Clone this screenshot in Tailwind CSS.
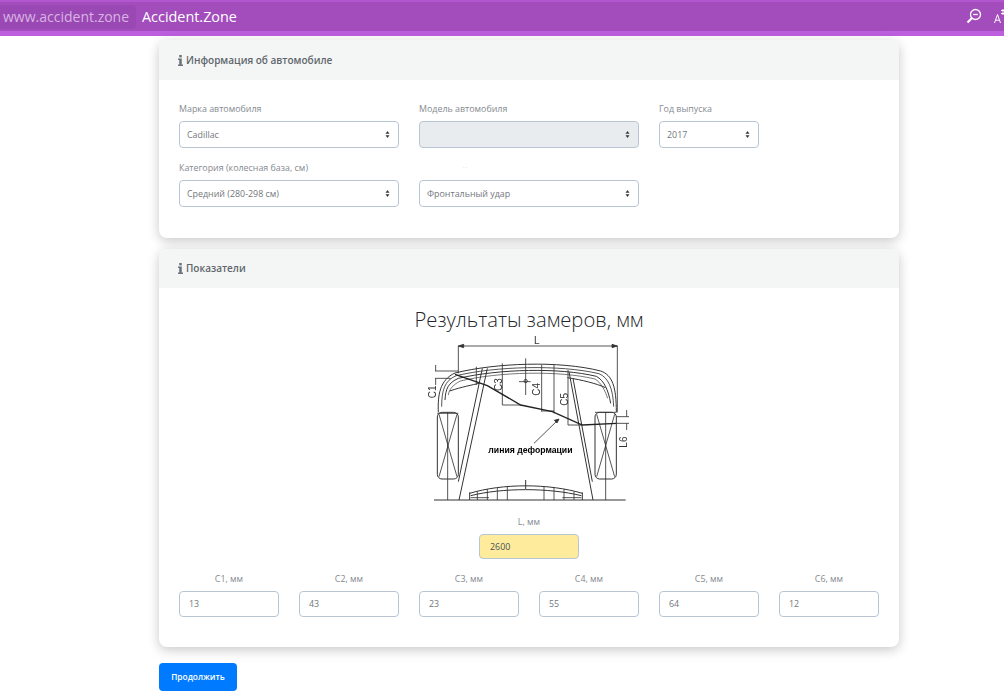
<!DOCTYPE html>
<html lang="ru">

<head>
    <meta charset="UTF-8">
    <meta name="viewport" content="width=device-width, initial-scale=1.0">
    <title>Accident.Zone</title>
    <script src="https://cdn.jsdelivr.net/npm/@tailwindcss/browser@4"></script>
</head>

<body class="bg-white font-['Open_Sans','Noto_Sans',sans-serif] h-[692px] w-[1004px] overflow-hidden">

    <!-- Navbar -->
    <header class="h-[36px] bg-[#a34dbd] border-t-2 border-b-[5px] border-t-[#b257cf] border-b-[#bc5edd] flex items-center justify-between overflow-hidden">
        <div class="flex items-center">
            <span class="h-[24px] w-[136px] pl-[3px] bg-[#9a48b3] rounded-r-sm text-[14px] leading-[23px] text-[#d8b4e4] whitespace-nowrap">www.accident.zone</span>
            <span class="ml-[6px] text-[14.4px] leading-[23px] text-white whitespace-nowrap">Accident.Zone</span>
        </div>
        <div class="flex items-center gap-[12px] -mr-[2px] -mt-[2px]">
            <svg class="w-[16px] h-[16px]" viewBox="0 0 16 16" fill="none" stroke="white">
                <circle cx="9.5" cy="6.5" r="5" stroke-width="1.3" />
                <path d="M7.2 6.5h4.6" stroke-width="1.3" />
                <path d="M6 10l-4.5 4.5" stroke-width="2.2" />
            </svg>
            <svg class="w-[12px] h-[16px]" viewBox="0 0 12 16" fill="none" stroke="white">
                <path d="M0.5 15L3.5 6.5L6.5 15M1.6 12.2h3.8" stroke-width="1" />
                <path d="M7 2.5h5M7 5.5h5M9 1v6" stroke-width="1" />
            </svg>
        </div>
    </header>

    <main class="w-[740px] ml-[159px] mt-[4px]">

        <!-- Car info -->
        <section class="h-[198px] rounded-lg bg-white shadow-[0_3px_12px_rgba(0,0,0,0.22)] overflow-hidden">
            <div class="h-[40px] bg-[#f4f6f6] px-[19px] flex items-center gap-[3px] text-[10px] font-semibold text-[#5f666c]">
                <svg class="w-[5px] h-[11px] fill-[#6c757d]" viewBox="0 0 5 11"><rect x="1.2" y="0" width="2.6" height="2.4" /><path d="M0 3.5h3.8v6h1.2V11H0V9.5h1.2v-4.5H0z" /></svg>
                Информация об автомобиле
            </div>
            <div class="px-[20px] pt-[21px] flex flex-wrap gap-x-[20px] gap-y-[12px] w-[740px]">
                <div class="w-[220px]">
                    <label class="block h-[20px] text-[8.9px] leading-[16px] text-[#858a8f]">Марка автомобиля</label>
                    <div class="relative h-[27px] border border-[#b8c6d4] rounded-[4px] pl-[7px] pt-[1px] flex items-center text-[8.9px] text-[#72777c]">Cadillac
                        <svg class="absolute right-[8px] top-[9px] w-[5px] h-[7px] fill-[#343a40]" viewBox="0 0 6 9"><path d="M3 0l2.6 3.5H.4zM3 9L.4 5.5h5.2z" /></svg>
                    </div>
                </div>
                <div class="w-[220px]">
                    <label class="block h-[20px] text-[8.9px] leading-[16px] text-[#858a8f]">Модель автомобиля</label>
                    <div class="relative h-[27px] border border-[#b8c6d4] rounded-[4px] bg-[#e9ecef]">
                        <svg class="absolute right-[8px] top-[9px] w-[5px] h-[7px] fill-[#343a40]" viewBox="0 0 6 9"><path d="M3 0l2.6 3.5H.4zM3 9L.4 5.5h5.2z" /></svg>
                    </div>
                </div>
                <div class="w-[100px]">
                    <label class="block h-[20px] text-[8.9px] leading-[16px] text-[#858a8f]">Год выпуска</label>
                    <div class="relative h-[27px] border border-[#b8c6d4] rounded-[4px] pl-[7px] pt-[1px] flex items-center text-[8.9px] text-[#72777c]">2017
                        <svg class="absolute right-[8px] top-[9px] w-[5px] h-[7px] fill-[#343a40]" viewBox="0 0 6 9"><path d="M3 0l2.6 3.5H.4zM3 9L.4 5.5h5.2z" /></svg>
                    </div>
                </div>
                <div class="w-[220px]">
                    <label class="block h-[20px] text-[8.9px] leading-[16px] text-[#858a8f]">Категория (колесная база, см)</label>
                    <div class="relative h-[27px] border border-[#b8c6d4] rounded-[4px] pl-[7px] pt-[1px] flex items-center text-[8.9px] text-[#72777c]">Средний (280-298 см)
                        <svg class="absolute right-[8px] top-[9px] w-[5px] h-[7px] fill-[#343a40]" viewBox="0 0 6 9"><path d="M3 0l2.6 3.5H.4zM3 9L.4 5.5h5.2z" /></svg>
                    </div>
                </div>
                <div class="w-[220px]">
                    <div class="h-[20px] pl-[44px] pt-[3px] text-[5px] leading-[6px] text-[#c4c8cc]">. ,</div>
                    <div class="relative h-[27px] border border-[#b8c6d4] rounded-[4px] pl-[7px] pt-[1px] flex items-center text-[8.9px] text-[#72777c]">Фронтальный удар
                        <svg class="absolute right-[8px] top-[9px] w-[5px] h-[7px] fill-[#343a40]" viewBox="0 0 6 9"><path d="M3 0l2.6 3.5H.4zM3 9L.4 5.5h5.2z" /></svg>
                    </div>
                </div>
            </div>
        </section>

        <!-- Measurements -->
        <section class="mt-[11px] h-[398px] rounded-lg bg-white shadow-[0_3px_12px_rgba(0,0,0,0.22)] overflow-hidden">
            <div class="h-[39px] bg-[#f4f6f6] px-[19px] flex items-center gap-[3px] text-[10px] font-semibold text-[#5f666c]">
                <svg class="w-[5px] h-[11px] fill-[#6c757d]" viewBox="0 0 5 11"><rect x="1.2" y="0" width="2.6" height="2.4" /><path d="M0 3.5h3.8v6h1.2V11H0V9.5h1.2v-4.5H0z" /></svg>
                Показатели
            </div>
            <div class="flex flex-col items-center">
                <h2 class="mt-[17px] h-[30px] text-[20.2px] leading-[28px] font-light text-[#212529]">Результаты замеров, мм</h2>

                <!-- Diagram -->
                <svg class="w-[220px] h-[175px] blur-[0.3px]" viewBox="0 0 660 525" fill="none" stroke="#333" stroke-width="2.5">
                    <path d="M118 33H595M118 33l16 -5v10zM595 33l-16 -5v10z" fill="#333" />
                    <path d="M118 33V115M595 33V232" />
                    <path d="M58 232C56 180 62 135 108 114C230 84 420 76 545 108C580 120 592 155 592 232" stroke-width="3" />
                    <path d="M68 215C68 168 76 136 112 122C230 94 420 88 540 116C568 128 582 160 584 215" stroke-width="2.5" />
                    <path d="M78 195C80 160 88 144 118 130C240 102 420 97 532 124C555 136 568 165 575 205" stroke-width="3" />
                    <path d="M88 180C90 165 100 150 124 138C240 110 420 106 528 132C545 142 558 165 566 190" stroke-width="2" />
                    <path d="M92 168C130 155 160 150 180 145M445 128C490 135 530 145 560 158" stroke-width="3" />
                    <path d="M55 235H118M528 232H592" />
                    <rect x="55" y="232" width="63" height="200" rx="14" stroke-width="3" />
                    <rect x="528" y="232" width="64" height="200" rx="14" stroke-width="3" />
                    <path d="M60 238L114 425M114 238L60 425M533 238L587 425M587 238L533 425" />
                    <path d="M86 232V495M560 232V495" />
                    <path d="M205 100L120 495M190 100L118 440M450 110L522 495M462 130L520 440" stroke-width="3" />
                    <path d="M172 95V150M250 85V210M368 90V230M405 90V235M447 105V270" />
                    <path d="M250 210H305M368 228H405M447 270H490" />
                    <path d="M108 118L205 152L305 210L400 230L490 270L592 265" stroke="#222" stroke-width="4" />
                    <path d="M320 70V180M300 140H335" />
                    <circle cx="320" cy="138" r="5" />
                    <path d="M345 325L420 252M420 252l-14 4l8 8z" fill="#333" />
                    <path d="M48 108H118M48 130H95M50 90V108M50 130V150" />
                    <path d="M592 245H630M592 265H630M623 225V245M623 265V285" />
                    <path d="M45 495H620" stroke-width="3" />
                    <path d="M152 475C250 445 390 445 490 475M155 482C250 458 390 458 487 482M152 495V472M490 495V472M320 435V462" stroke-width="3" />
                    <path d="M175 470V495M205 462V495M235 458V495M265 455V495M375 455V495M405 458V495M435 462V495M465 470V495M155 488H210M430 488H487" />
                    <g fill="#333" stroke="none" font-family="'Liberation Sans',sans-serif" font-size="30">
                        <text x="345" y="26">L</text>
                        <text transform="translate(50 190) rotate(-90)">C1</text>
                        <text transform="translate(250 168) rotate(-90)">C3</text>
                        <text transform="translate(362 182) rotate(-90)">C4</text>
                        <text transform="translate(446 212) rotate(-90)">C5</text>
                        <text transform="translate(625 338) rotate(-90)">L6</text>
                    </g>
                    <text x="208" y="354" fill="#000" stroke="none" font-family="'Liberation Sans',sans-serif" font-weight="700" font-size="26">линия деформации</text>
                </svg>

                <label class="mt-[5px] h-[19px] text-[8.9px] leading-[14px] text-[#858a8f]">L, мм</label>
                <div class="w-[100px] h-[25px] bg-[#ffeb9c] border border-[#b8c6d4] rounded-[4px] pl-[10px] flex items-center text-[8.9px] text-[#495057]">2600</div>

                <div class="mt-[13px] flex gap-[20px]">
                    <div class="w-[100px]"><label class="block h-[19px] text-center text-[8.9px] leading-[14px] text-[#858a8f]">C1, мм</label><div class="h-[26px] border border-[#b8c6d4] rounded-[4px] pl-[9px] flex items-center text-[8.9px] text-[#72777c]">13</div></div>
                    <div class="w-[100px]"><label class="block h-[19px] text-center text-[8.9px] leading-[14px] text-[#858a8f]">C2, мм</label><div class="h-[26px] border border-[#b8c6d4] rounded-[4px] pl-[9px] flex items-center text-[8.9px] text-[#72777c]">43</div></div>
                    <div class="w-[100px]"><label class="block h-[19px] text-center text-[8.9px] leading-[14px] text-[#858a8f]">C3, мм</label><div class="h-[26px] border border-[#b8c6d4] rounded-[4px] pl-[9px] flex items-center text-[8.9px] text-[#72777c]">23</div></div>
                    <div class="w-[100px]"><label class="block h-[19px] text-center text-[8.9px] leading-[14px] text-[#858a8f]">C4, мм</label><div class="h-[26px] border border-[#b8c6d4] rounded-[4px] pl-[9px] flex items-center text-[8.9px] text-[#72777c]">55</div></div>
                    <div class="w-[100px]"><label class="block h-[19px] text-center text-[8.9px] leading-[14px] text-[#858a8f]">C5, мм</label><div class="h-[26px] border border-[#b8c6d4] rounded-[4px] pl-[9px] flex items-center text-[8.9px] text-[#72777c]">64</div></div>
                    <div class="w-[100px]"><label class="block h-[19px] text-center text-[8.9px] leading-[14px] text-[#858a8f]">C6, мм</label><div class="h-[26px] border border-[#b8c6d4] rounded-[4px] pl-[9px] flex items-center text-[8.9px] text-[#72777c]">12</div></div>
                </div>
            </div>
        </section>

        <button class="mt-[16px] w-[78px] h-[28px] bg-[#007bff] rounded-[4px] text-white text-[8.4px] font-semibold">Продолжить</button>
    </main>

</body>

</html>
